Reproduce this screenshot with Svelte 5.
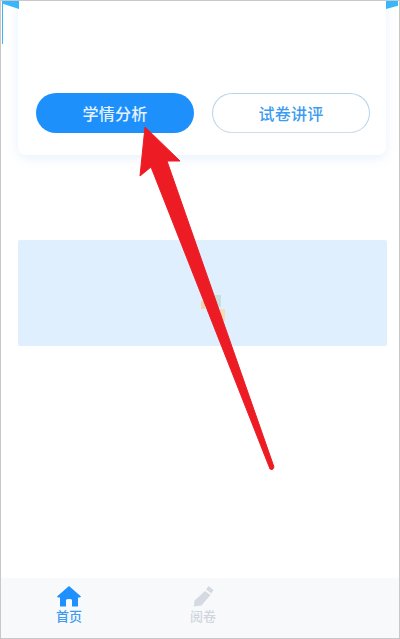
<script lang="ts">
    const tabs = [
        { label: '首页', active: true },
        { label: '阅卷', active: false }
    ];
</script>

<div class="page">
    <div class="hero">
        <div class="card">
            <div class="actions">
                <button class="btn btn-solid" type="button">学情分析</button>
                <button class="btn btn-outline" type="button">试卷讲评</button>
            </div>
        </div>
    </div>

    <div class="banner"></div>

    <nav class="tabbar">
        {#each tabs as tab}
            <div class="tab" class:active={tab.active}>
                {#if tab.active}
                    <svg width="26" height="21" viewBox="0 0 26 21">
                        <path fill="#1e90ff" d="M13 0 L25 10.500 L24 11.500 L22 11.500 L22 20 Q22 20.500 21 20.500 L16 20.500 L16 14 Q16 13 13 13 Q10 13 10 14 L10 20.500 L5 20.500 Q4 20.500 4 20 L4 11.500 L2 11.500 L1 10.500 Z" />
                    </svg>
                {:else}
                    <svg width="26" height="21" viewBox="0 0 26 21">
                        <path fill="#d5dae2" d="M18.500 0 L23.500 4 L21.500 7.500 L16 3.500 Z M15 5 L20.500 9 L11.500 19.500 L4 20.500 L4.500 14.500 Z" />
                    </svg>
                {/if}
                <span>{tab.label}</span>
            </div>
        {/each}
    </nav>

    <i class="corner corner-left"></i>
    <i class="sliver"></i>
    <i class="corner corner-right"></i>
    <i class="smudge"></i>

    <svg class="arrow" width="400" height="639" viewBox="0 0 400 639">
        <path fill="#ed1c24" stroke="#ed1c24" stroke-width="1" stroke-linejoin="round" d="M145 127 L180 161 L167 161 L274 467 Q273 471 270 469 L151 167 L140 176 Z" />
    </svg>
</div>

<style>
    :global(body) {
        margin: 0;
        background: #fff;
    }

    .page {
        position: relative;
        box-sizing: border-box;
        width: 400px;
        height: 639px;
        overflow: hidden;
        display: flex;
        flex-direction: column;
        background: #fff;
        border: 1px solid #c8c8c8;
        font-family: "Noto Sans CJK SC", "Liberation Sans", sans-serif;
    }

    .hero {
        padding: 0 13px 0 17px;
    }

    .card {
        box-sizing: border-box;
        height: 154px;
        padding: 92px 16px 0 18px;
        background: #fff;
        border-radius: 0 0 8px 8px;
        box-shadow: 0 3px 12px rgba(30, 130, 240, 0.1);
    }

    .actions {
        display: flex;
        justify-content: space-between;
    }

    .btn {
        box-sizing: border-box;
        width: 158px;
        height: 40px;
        padding: 0;
        border-radius: 20px;
        font-family: inherit;
        font-size: 16px;
        font-weight: 500;
        letter-spacing: 0.3px;
    }

    .btn-solid {
        background: #1e90fc;
        border: none;
        color: #e6f2ff;
    }

    .btn-outline {
        background: #fff;
        border: 1px solid #b5d4ea;
        border-bottom-color: #d0dce6;
        color: #3d9bf0;
    }

    .banner {
        height: 106px;
        margin: 85px 12px 0 17px;
        background: #e0effd;
        border-radius: 2px;
    }

    .tabbar {
        margin-top: auto;
        height: 60px;
        display: flex;
        padding-left: 1px;
        background: #f8f9fa;
    }

    .tab {
        width: 134px;
        display: flex;
        flex-direction: column;
        align-items: center;
        padding-top: 8px;
        color: #d0d5de;
        font-size: 13px;
        font-weight: 500;
        line-height: 16px;
    }

    .tab svg {
        display: block;
        margin-bottom: 1px;
    }

    .tab.active {
        color: #3d9bf0;
    }

    .corner {
        position: absolute;
        top: 0;
        background: #38b6fb;
    }

    .corner-left {
        left: 1px;
        width: 17px;
        height: 8px;
        clip-path: polygon(0 0, 100% 0, 100% 100%, 0 30%);
    }

    .sliver {
        position: absolute;
        left: 1px;
        top: 0;
        width: 1px;
        height: 43px;
        background: #38b6fb;
    }

    .corner-right {
        right: 1px;
        width: 12px;
        height: 8px;
        clip-path: polygon(0 0, 100% 0, 100% 60%, 0 100%);
    }

    /* faint leftovers peeking out beside the arrow shaft */
    .smudge {
        position: absolute;
        left: 200px;
        top: 294px;
        width: 25px;
        height: 32px;
        background:
            linear-gradient(#f6d3a8, #f6d3a8) 0 6px / 4px 8px no-repeat,
            linear-gradient(#c4e2dc, #c4e2dc) 14px 0 / 6px 12px no-repeat,
            linear-gradient(#f6dcb8, #f6dcb8) 19px 14px / 5px 12px no-repeat;
    }

    .arrow {
        position: absolute;
        left: -1px;
        top: -1px;
        pointer-events: none;
    }
</style>
